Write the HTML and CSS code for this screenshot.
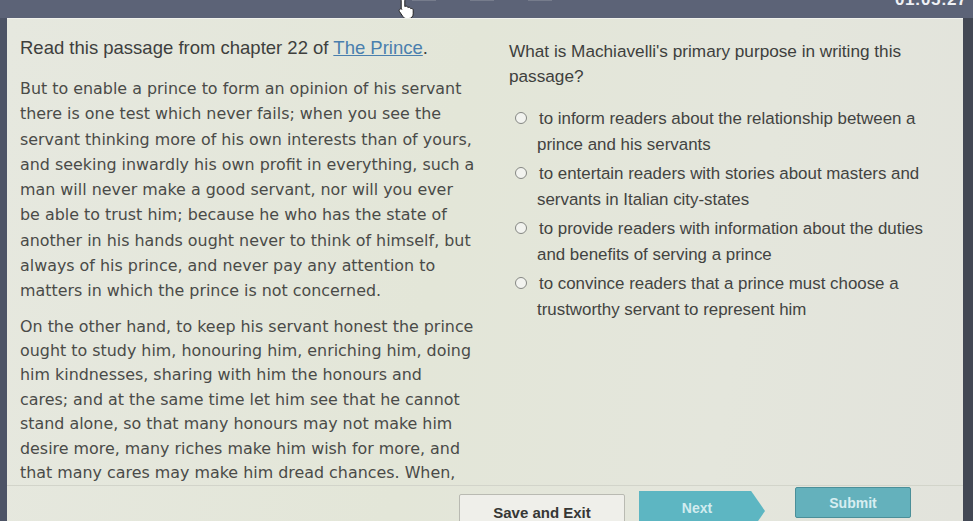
FILE: index.html
```html
<!DOCTYPE html>
<html>
<head>
<meta charset="utf-8">
<link rel="stylesheet" href="styles.css">
</head>
<body>
<div class="topbar">
  <div class="topbits"><span></span><span></span><span></span></div>
  <div class="timer">01:05:27</div>
  <svg class="cursor" width="20" height="22" viewBox="0 0 20 22"><path d="M6 1.5c1 0 1.8.8 1.8 1.8v6.2l1-.3c.9-.2 1.6.2 1.9.9l.2.4.8-.2c.9-.2 1.6.3 1.9 1l.1.3.7-.1c1-.1 1.8.6 1.8 1.6v3.8c0 2.6-2 4.7-4.6 4.7H9.7c-1.6 0-3-.8-3.900-2.1L2.4 14.4c-.5-.8-.3-1.8.5-2.3.7-.4 1.6-.3 2.1.3l-.8-.9V3.3C4.2 2.3 5 1.5 6 1.5z" fill="#fff" stroke="#222" stroke-width="1"/></svg>
</div>
<div class="frame">
  <div class="edge-left"></div>
  <div class="panel">
    <div class="content">
      <div class="passage-col">
        <p class="intro">Read this passage from chapter 22 of <a class="title">The Prince</a>.</p>
        <p class="para p1">But to enable a prince to form an opinion of his servant<br>there is one test which never fails; when you see the<br>servant thinking more of his own interests than of yours,<br>and seeking inwardly his own profit in everything, such a<br>man will never make a good servant, nor will you ever<br>be able to trust him; because he who has the state of<br>another in his hands ought never to think of himself, but<br>always of his prince, and never pay any attention to<br>matters in which the prince is not concerned.</p>
        <p class="para p2">On the other hand, to keep his servant honest the prince<br>ought to study him, honouring him, enriching him, doing<br>him kindnesses, sharing with him the honours and<br>cares; and at the same time let him see that he cannot<br>stand alone, so that many honours may not make him<br>desire more, many riches make him wish for more, and<br>that many cares may make him dread chances. When,</p>
      </div>
      <div class="question-col">
        <p class="question">What is Machiavelli's primary purpose in writing this<br>passage?</p>
        <div class="options">
          <div class="option"><span class="radio"></span>to inform readers about the relationship between a<br>prince and his servants</div>
          <div class="option"><span class="radio"></span>to entertain readers with stories about masters and<br>servants in Italian city-states</div>
          <div class="option"><span class="radio"></span>to provide readers with information about the duties<br>and benefits of serving a prince</div>
          <div class="option"><span class="radio"></span>to convince readers that a prince must choose a<br>trustworthy servant to represent him</div>
        </div>
      </div>
    </div>
    <div class="footer">
      <button class="btn save">Save and Exit</button>
      <button class="btn next">Next</button>
      <button class="btn submit">Submit</button>
    </div>
  </div>
  <div class="edge-right"></div>
</div>
</body>
</html>
```
FILE: styles.css
```css
html, body {
  margin: 0;
  padding: 0;
  width: 973px;
  height: 521px;
  overflow: hidden;
  background: #4b5162;
}
.topbar {
  position: relative;
  height: 18px;
  background: #5c6377;
  display: flex;
  justify-content: flex-end;
  overflow: hidden;
}
.timer {
  font-family: "Liberation Sans", Arial, sans-serif;
  font-weight: bold;
  font-size: 17px;
  color: #eef0f4;
  margin-top: -10px;
  margin-right: 6px;
  letter-spacing: 0.5px;
}
.topbits {
  position: absolute;
  left: 412px;
  top: 0;
  display: flex;
  gap: 34px;
}
.topbits span {
  display: block;
  width: 24px;
  height: 1px;
  background: #767c8c;
}
.cursor {
  position: absolute;
  left: 397px;
  top: -3px;
}
.frame {
  display: flex;
  height: 503px;
}
.edge-left {
  width: 7px;
  background: #4d5466;
}
.edge-right {
  width: 10px;
  background: #434854;
}
.panel {
  flex: 1;
  display: flex;
  flex-direction: column;
  background: linear-gradient(100deg, #e6e8df 0%, #e3e6d8 45%, #e4e6dc 75%, #e2e3dc 100%);
  border-top: 1px solid #f0f1ec;
  overflow: hidden;
}
.content {
  height: 466px;
  flex-shrink: 0;
  overflow: hidden;
  display: flex;
}
.passage-col {
  width: 489px;
  padding-left: 13px;
  padding-top: 16px;
}
.intro {
  margin: 0;
  font-family: "Liberation Sans", Arial, sans-serif;
  font-size: 18.5px;
  line-height: 25px;
  color: #3e3f3d;
}
.title {
  color: #4a7fae;
  text-decoration: underline;
}
.para {
  margin: 16px 0 0;
  font-family: "DejaVu Sans", Verdana, sans-serif;
  font-size: 15.9px;
  color: #4a4b48;
}
.p1 {
  line-height: 25.3px;
}
.p2 {
  margin-top: 11px;
  line-height: 24.4px;
}
.question-col {
  flex: 1;
  padding-top: 20px;
}
.question {
  margin: 0;
  font-family: "Liberation Sans", Arial, sans-serif;
  font-size: 17.2px;
  line-height: 25px;
  color: #3e3f3d;
}
.options {
  margin-top: 17px;
  display: flex;
  flex-direction: column;
  gap: 3px;
}
.option {
  font-family: "Liberation Sans", Arial, sans-serif;
  font-size: 16.9px;
  line-height: 26px;
  color: #424341;
  padding-left: 28px;
  text-indent: -22px;
}
.radio {
  display: inline-block;
  width: 10px;
  height: 10px;
  border: 1.5px solid #858783;
  border-radius: 50%;
  background: #f2f3ef;
  margin-right: 12px;
  vertical-align: 0px;
}
.footer {
  flex: 1;
  border-top: 1px solid #d2d4ca;
  display: flex;
  align-items: flex-start;
  padding-left: 452px;
  overflow: hidden;
}
.btn {
  font-family: "Liberation Sans", Arial, sans-serif;
  font-weight: bold;
  padding: 0;
  border: none;
  flex-shrink: 0;
}
.save {
  margin-top: 8px;
  width: 166px;
  height: 36px;
  background: #efefea;
  border: 1px solid #b9bab2;
  border-radius: 2px;
  color: #363735;
  font-size: 15px;
}
.next {
  margin-top: 5px;
  margin-left: 14px;
  width: 126px;
  height: 40px;
  background: #5db6c2;
  clip-path: polygon(0 0, 89% 0, 100% 50%, 89% 100%, 0 100%);
  color: #d2ecef;
  font-size: 14px;
  padding-right: 10px;
  padding-bottom: 6px;
}
.submit {
  margin-top: 1px;
  margin-left: 30px;
  width: 116px;
  height: 31px;
  background: #64b1bc;
  border: 1px solid #4b8f99;
  border-radius: 2px;
  color: #d8eef1;
  font-size: 14px;
}
```
